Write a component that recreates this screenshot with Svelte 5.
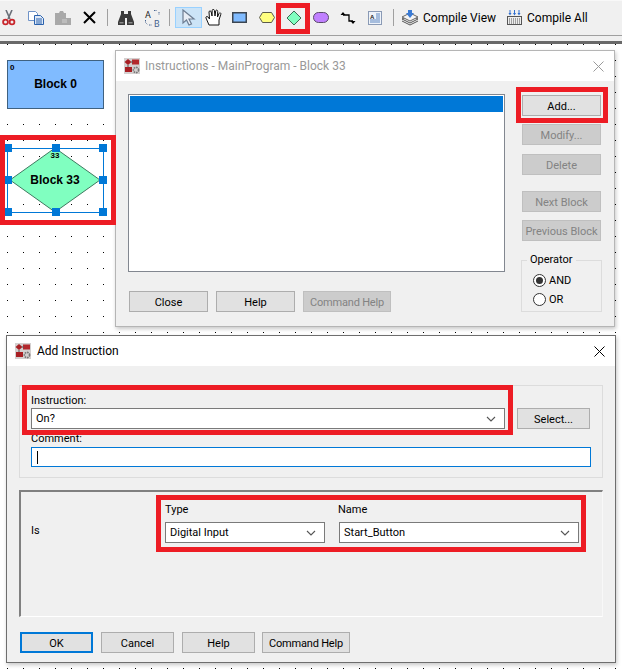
<script lang="ts">
  let handles = [
    [8, 148], [56, 148], [103, 148],
    [8, 180], [103, 180],
    [8, 212], [56, 212], [103, 212]
  ];
  let sideButtons = [
    { label: 'Add...', cls: '' },
    { label: 'Modify...', cls: 'off s8' },
    { label: 'Delete', cls: 'off s9' },
    { label: 'Next Block', cls: 'off s16' },
    { label: 'Previous Block', cls: 'off s8' }
  ];
</script>

{#snippet appIcon()}
  <svg class="app-icon" viewBox="0 0 16 16" width="16" height="16">
    <rect width="16" height="16" fill="#d4d0d0" />
    <path d="M4 1l3.5 3L4 7 .5 4z" fill="#a81f24" />
    <rect x="8" y="1.5" width="7" height="5" fill="#b3282c" />
    <path d="M4 7v2M7 4h2" stroke="#555" />
    <rect x="1" y="9" width="7" height="5" fill="#a81f24" />
    <circle cx="12" cy="12" r="2.6" fill="none" stroke="#777" stroke-width="1.6" stroke-dasharray="1.6 .8" />
  </svg>
{/snippet}

{#snippet chevron()}
  <svg class="chev" viewBox="0 0 10 6" width="10" height="6"><path d="M1 1l4 4 4-4" fill="none" stroke="#555" stroke-width="1.1" /></svg>
{/snippet}

<div class="app">
  <div class="toolbar">
    <span class="slot first">
      <svg viewBox="0 0 16 16" width="16" height="16">
        <path d="M5 0l4 9M11 0L7 9" stroke="#6a6f78" stroke-width="1.6" fill="none" />
        <circle cx="4.5" cy="12" r="2.4" fill="none" stroke="#c8262c" stroke-width="1.8" />
        <circle cx="11" cy="12" r="2.4" fill="none" stroke="#c8262c" stroke-width="1.8" />
      </svg>
    </span>
    <span class="slot">
      <svg viewBox="0 0 16 14" width="16" height="14">
        <path d="M.5.5h7l2 2v7h-9z" fill="#fff" stroke="#6f93c8" />
        <path d="M6.5 4.5h6l3 3v6h-9z" fill="#dfe9f7" stroke="#2b62ad" />
        <path d="M8 8h6M8 10h6M8 12h6" stroke="#2b62ad" />
      </svg>
    </span>
    <span class="slot">
      <svg viewBox="0 0 16 14" width="16" height="14">
        <path d="M0 2h4l1-2h3l1 2h2v5h5v7H0z" fill="#a9a9a9" />
        <path d="M7 8h5v4H7z" fill="#bdbdbd" />
      </svg>
    </span>
    <span class="slot">
      <svg viewBox="0 0 13 13" width="13" height="13"><path d="M1 1l11 11M12 1L1 12" stroke="#000" stroke-width="2" /></svg>
    </span>
    <span class="sep"></span>
    <span class="slot">
      <svg viewBox="0 0 16 14" width="16" height="14">
        <path d="M3 0h3v3h4V0h3v3l3 8v3H9V7H7v7H0v-3l3-8z" fill="#3b3b3b" />
        <path d="M1.500 11h4v1.500h-4zM10.500 11h4v1.500h-4z" fill="#8a8a8a" />
      </svg>
    </span>
    <span class="slot">
      <svg class="ab" viewBox="0 0 20 20" width="20" height="20">
        <text x="2" y="10" class="ab-a">A</text>
        <text x="11" y="19" class="ab-b">B</text>
        <path d="M11 2.500h3M16 4v3M2.500 12v2.500l2 2M6 17h3" stroke="#47638f" stroke-dasharray="1.500 1" fill="none" />
      </svg>
    </span>
    <span class="sep sep-b"></span>
    <span class="slot picked">
      <svg viewBox="0 0 14 17" width="14" height="17">
        <path d="M1 1v13l3.500-3 2.500 5 2.500-1-2.500-5H12z" fill="#e8eef6" stroke="#6d7d92" stroke-width="1.200" />
      </svg>
    </span>
    <span class="slot hand">
      <svg viewBox="0 0 18 17" width="18" height="17">
        <path d="M4 16L1 9c-.5-1.500 1-2 2-1l1.500 2L4 3c0-1.500 2-1.500 2.200 0L7 7 7.200 1.500c0-1.500 2-1.500 2.200 0L10 7l.7-5c.2-1.500 2.200-1 2 .5L12.500 8l1.500-3.500c.6-1.300 2.300-.6 1.800.8L14 11v5z" fill="#fff" stroke="#111" />
      </svg>
    </span>
    <span class="slot">
      <svg viewBox="0 0 15 11" width="15" height="11"><rect x=".75" y=".75" width="13.500" height="9.500" fill="#80bbff" stroke="#3c4652" stroke-width="1.500" /></svg>
    </span>
    <span class="slot">
      <svg viewBox="0 0 16 11" width="16" height="11"><path d="M3.500.5h9L15.500 5.500 12.500 10.500h-9L.5 5.500z" fill="#ffff80" stroke="#5a5a4a" /></svg>
    </span>
    <span class="slot">
      <svg viewBox="0 0 16 16" width="16" height="16"><path d="M8 1l7 7-7 7-7-7z" fill="#80ffc0" stroke="#3c6a54" /></svg>
    </span>
    <span class="slot">
      <svg viewBox="0 0 16 11" width="16" height="11"><rect x=".5" y=".5" width="15" height="10" rx="5" fill="#c080ff" stroke="#5a4a6a" /></svg>
    </span>
    <span class="slot">
      <svg viewBox="0 0 16 14" width="16" height="14">
        <path d="M3 4h6v6h4" fill="none" stroke="#000" stroke-width="1.300" />
        <path d="M.5 4L3 1l2.500 3zM10.500 10h5L13 13z" fill="#000" />
      </svg>
    </span>
    <span class="slot">
      <svg viewBox="0 0 14 14" width="14" height="14">
        <rect x=".5" y=".5" width="13" height="13" fill="#eef3fa" stroke="#8a9ab5" />
        <text x="2" y="7.500" class="doc-a">A</text>
        <path d="M8 3h4M8 5h4M8 7h4M2 9h10M2 11h10" stroke="#5d86c0" />
      </svg>
    </span>
    <span class="sep sep-c"></span>
    <svg class="tb-icon" viewBox="0 0 16 16" width="16" height="16">
      <path d="M0 9l8-4 8 4-8 4z" fill="#e8e8e8" stroke="#555" />
      <path d="M0 11l8 4 8-4" fill="none" stroke="#555" />
      <path d="M0 7l8-4 8 4-8 4z" fill="#f4f4f4" stroke="#666" />
      <path d="M6 0h4v3h2L8 8 4 3h2z" fill="#3a7bd5" />
    </svg>
    <span class="tb-text">Compile View</span>
    <svg class="tb-icon second" viewBox="0 0 15 16" width="15" height="16">
      <path d="M3 0v4M7.500 0v4M12 0v4" stroke="#2f6fd0" />
      <path d="M1.500 3L3 5.500 4.500 3zM6 3l1.500 2.500L9 3zM10.500 3L12 5.500 13.500 3z" fill="#2f6fd0" />
      <rect x=".5" y="6.500" width="14" height="8" fill="#eee" stroke="#555" />
      <path d="M2 9h11M2 11h11M2 13h11" stroke="#555" stroke-dasharray="1 1" />
    </svg>
    <span class="tb-text">Compile All</span>
  </div>
  <div class="toolbar-end"></div>

  <div class="canvas">
    <div class="block-rect">
      <span class="num">0</span>
      <span class="name">Block 0</span>
    </div>

    <svg class="diamond" viewBox="0 0 92 66" width="92" height="66">
      <path d="M46 1l45 32-45 32L1 33z" fill="#80ffc0" stroke="#3f7a60" />
      <text x="46" y="11" class="dia-num">33</text>
      <text x="46" y="37" class="dia-name">Block 33</text>
    </svg>
    <div class="selection"></div>
    {#each handles as [x, y]}
      <span class="handle" style="left: {x - 4}px; top: {y - 48}px"></span>
    {/each}

    <section class="dialog instructions">
      <header class="title inactive">
        {@render appIcon()}
        <span>Instructions - MainProgram - Block 33</span>
        <svg class="close" viewBox="0 0 11 11" width="11" height="11"><path d="M.5.5l10 10M10.500.5l-10 10" stroke="#9a9a9a" /></svg>
      </header>
      <div class="ins-body">
        <div class="ins-main">
          <div class="list"><div class="list-row"></div></div>
          <div class="ins-footer">
            <button class="btn w79">Close</button>
            <button class="btn w79">Help</button>
            <button class="btn w88 off">Command Help</button>
          </div>
        </div>
        <div class="ins-side">
          {#each sideButtons as b}
            <button class="btn w79 {b.cls}">{b.label}</button>
          {/each}
          <fieldset class="operator">
            <legend>Operator</legend>
            <div class="radio"><span class="dot on"></span>AND</div>
            <div class="radio"><span class="dot"></span>OR</div>
          </fieldset>
        </div>
      </div>
    </section>

    <section class="dialog add">
      <header class="title">
        {@render appIcon()}
        <span>Add Instruction</span>
        <svg class="close" viewBox="0 0 11 11" width="11" height="11"><path d="M.5.5l10 10M10.500.5l-10 10" stroke="#000" /></svg>
      </header>
      <div class="add-body">
        <div class="group-top">
          <div class="lbl">Instruction:</div>
          <div class="instr-row">
            <div class="combo">On?{@render chevron()}</div>
            <button class="btn w73">Select...</button>
          </div>
          <div class="lbl comment">Comment:</div>
          <div class="input"><span class="caret"></span></div>
        </div>
        <div class="group-is">
          <div class="lbl"></div>
          <div class="lbl">Type</div>
          <div class="lbl">Name</div>
          <div class="lbl">Is</div>
          <div class="combo">Digital Input{@render chevron()}</div>
          <div class="combo">Start_Button{@render chevron()}</div>
        </div>
        <div class="add-footer">
          <button class="btn w73 default">OK</button>
          <button class="btn w73">Cancel</button>
          <button class="btn w73">Help</button>
          <button class="btn w88 tight">Command Help</button>
        </div>
      </div>
    </section>
  </div>

  <!-- red annotation boxes from the tutorial -->
  <div class="mark m-tool"></div>
  <div class="mark m-block"></div>
  <div class="mark m-add"></div>
  <div class="mark m-instr"></div>
  <div class="mark m-type"></div>
</div>

<style>
  :global(body) {
    margin: 0;
    background: #fff;
  }

  .app {
    position: relative;
    display: flex;
    flex-direction: column;
    width: 622px;
    height: 669px;
    overflow: hidden;
    font-family: Roboto, "Open Sans", sans-serif;
    font-size: 12px;
    color: #000;
  }

  .toolbar {
    display: flex;
    align-items: center;
    box-sizing: border-box;
    height: 36px;
    padding-bottom: 1px;
    background: #f0f0f0;
    border-top: 1px solid #f8f8f8;
    border-bottom: 1px solid #a0a0a0;
  }

  .toolbar-end {
    height: 5px;
    background: #f0f0f0;
    border-bottom: 3px solid #696969;
  }

  .slot {
    display: flex;
    flex: none;
    align-items: center;
    justify-content: center;
    box-sizing: border-box;
    width: 27px;
    height: 21px;
  }

  .slot.first { margin-left: -5px; }
  .slot.hand { width: 24px; }

  .slot.picked {
    margin-left: 5px;
    background: #cce4f7;
    border: 1px solid #99d1ff;
  }

  .sep {
    flex: none;
    width: 1px;
    height: 17px;
    margin: 0 4px;
    background: #a0a0a0;
  }

  .sep-b { margin: 0 0 0 3px; }
  .sep-c { margin: 0 8px 0 5px; }

  .tb-icon { flex: none; }
  .tb-icon.second { margin-left: 11px; }
  .tb-text { margin-left: 5px; white-space: nowrap; }

  .ab-a, .ab-b {
    font-family: Roboto, sans-serif;
    font-size: 9px;
    fill: #222;
  }

  .ab-b { fill: #47638f; }

  .doc-a {
    font-family: "Liberation Sans", sans-serif;
    font-size: 6px;
    font-weight: bold;
    fill: #222;
  }

  .canvas {
    position: relative;
    flex: 1;
    background-color: #fff;
    background-image: radial-gradient(circle at 7.5px 0.5px, #000 0.55px, transparent 0.75px);
    background-size: 16px 16px;
  }

  .block-rect {
    position: absolute;
    left: 7px;
    top: 16px;
    display: flex;
    align-items: center;
    justify-content: center;
    box-sizing: border-box;
    width: 97px;
    height: 49px;
    padding-bottom: 2px;
    background: #80bbff;
    border: 1px solid #3f6180;
    font-family: "Liberation Sans", sans-serif;
    font-weight: bold;
  }

  .block-rect .num {
    position: absolute;
    left: 2px;
    top: 2px;
    font-size: 8px;
  }

  .diamond {
    position: absolute;
    left: 9px;
    top: 103px;
  }

  .dia-num, .dia-name {
    font-family: "Liberation Sans", sans-serif;
    font-weight: bold;
    text-anchor: middle;
  }

  .dia-num { font-size: 8px; }
  .dia-name { font-size: 12px; }

  .selection {
    position: absolute;
    left: 7px;
    top: 104px;
    box-sizing: border-box;
    width: 97px;
    height: 65px;
    border: 1px solid #0078d7;
  }

  .handle {
    position: absolute;
    width: 8px;
    height: 8px;
    background: #0078d7;
  }

  .dialog {
    position: absolute;
    display: flex;
    flex-direction: column;
    box-sizing: border-box;
    background: #f0f0f0;
    box-shadow: 1px 2px 4px rgba(0, 0, 0, 0.22);
  }

  .instructions {
    left: 115px;
    top: 6px;
    width: 500px;
    height: 277px;
    border: 1px solid #b5b5b5;
  }

  .add {
    left: 6px;
    top: 291px;
    width: 610px;
    height: 328px;
    border: 1px solid #6e6e6e;
  }

  .title {
    display: flex;
    flex: none;
    align-items: center;
    gap: 5px;
    height: 30px;
    padding: 0 8px;
    background: #fff;
    white-space: nowrap;
  }

  .add .title { gap: 6px; padding: 0 8px; }
  .title.inactive { color: #999; }
  .app-icon { flex: none; }
  .close { flex: none; margin-left: auto; margin-right: 2px; }

  .btn {
    flex: none;
    box-sizing: border-box;
    height: 21px;
    padding: 1px 0 0;
    background: #e1e1e1;
    border: 1px solid #adadad;
    border-radius: 0;
    font: inherit;
    color: #000;
    text-align: center;
    white-space: nowrap;
  }

  .btn.off {
    background: #ccc;
    border-color: #bfbfbf;
    color: #838383;
  }

  .btn.default {
    border: 2px solid #0078d7;
  }

  .w73 { width: 73px; }
  .w79 { width: 79px; }
  .w88 { width: 88px; letter-spacing: -0.2px; }
  .s8 { margin-top: 8px; }
  .s9 { margin-top: 9px; }
  .s16 { margin-top: 16px; }

  .ins-body {
    display: flex;
    gap: 17px;
    padding: 13px 0 0 12px;
    font-size: 11px;
  }

  .list {
    box-sizing: border-box;
    width: 377px;
    height: 178px;
    padding: 1px;
    background: #fff;
    border: 1px solid #828790;
  }

  .list-row {
    height: 16px;
    background: #0078d7;
  }

  .ins-footer {
    display: flex;
    gap: 8px;
    margin: 19px 0 0 1px;
  }

  .ins-side {
    display: flex;
    flex-direction: column;
    align-items: flex-start;
    padding-top: 1px;
  }

  .operator {
    box-sizing: border-box;
    width: 81px;
    height: 61px;
    margin: 10px 0 0 -1px;
    padding: 2px 0 0 11px;
    border: 1px solid #dcdcdc;
  }

  .operator legend {
    margin-left: -6px;
    padding: 0 3px;
    line-height: 18px;
  }

  .radio {
    display: flex;
    align-items: center;
    gap: 3px;
    height: 19px;
  }

  .dot {
    position: relative;
    box-sizing: border-box;
    width: 13px;
    height: 13px;
    background: #fff;
    border: 1px solid #333;
    border-radius: 50%;
  }

  .dot.on::after {
    content: "";
    position: absolute;
    inset: 2px;
    background: #333;
    border-radius: 50%;
  }

  .add-body {
    display: flex;
    flex-direction: column;
    padding: 19px 0 0 12px;
    font-size: 11px;
  }

  .group-top {
    box-sizing: border-box;
    width: 584px;
    height: 93px;
    padding: 6px 0 0 11px;
    border: 1px solid #dcdcdc;
  }

  .lbl {
    box-sizing: border-box;
    height: 16px;
    padding-top: 1px;
    line-height: 16px;
    white-space: nowrap;
  }

  .lbl.comment { padding-top: 0; }

  .instr-row {
    display: grid;
    grid-template-columns: 474px 73px;
    gap: 12px;
    margin-bottom: 2px;
  }

  .combo {
    display: flex;
    align-items: center;
    justify-content: space-between;
    box-sizing: border-box;
    height: 21px;
    padding: 0 8px 0 4px;
    background: #fff;
    border: 1px solid #7a7a7a;
    white-space: nowrap;
  }

  .input {
    display: flex;
    align-items: center;
    box-sizing: border-box;
    width: 560px;
    height: 20px;
    padding-left: 5px;
    background: #fff;
    border: 1px solid #0078d7;
  }

  .caret {
    width: 1px;
    height: 13px;
    background: #000;
  }

  .group-is {
    display: grid;
    grid-template-columns: 134px 160px 241px;
    grid-template-rows: 16px 21px;
    column-gap: 0;
    row-gap: 5px;
    box-sizing: border-box;
    width: 584px;
    height: 127px;
    margin-top: 12px;
    padding: 9px 0 0 10px;
    background: #f0f0f0;
    border-style: solid;
    border-width: 2px 1px 1px 2px;
    border-color: #808080 #f8f8f8 #fff #808080;
  }

  .group-is .combo:last-child {
    width: 240px;
    margin-left: 14px;
  }

  .group-is .lbl:nth-child(3) { margin-left: 13px; }

  .add-footer {
    display: flex;
    gap: 8px;
    margin: 15px 0 0 1px;
  }

  .btn.tight { margin-left: -1px; }

  .mark {
    position: absolute;
    box-sizing: border-box;
    border: 5px solid #ed1c24;
    pointer-events: none;
  }

  .m-tool { left: 276px; top: 3px; width: 34px; height: 31px; }
  .m-block { left: 0; top: 135px; width: 116px; height: 90px; }
  .m-add { left: 516px; top: 87px; width: 92px; height: 36px; }
  .m-instr { left: 22px; top: 385px; width: 491px; height: 50px; }
  .m-type { left: 156px; top: 495px; width: 430px; height: 57px; }
</style>
